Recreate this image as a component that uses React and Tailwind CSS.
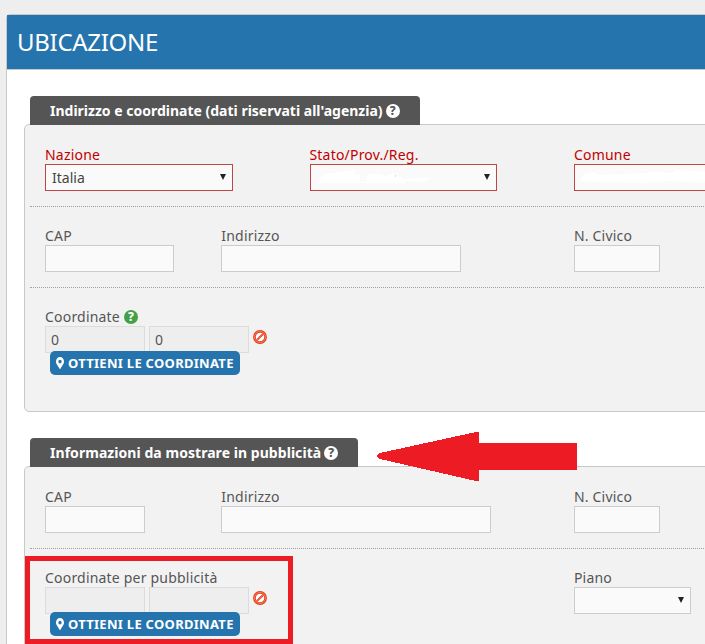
import React from 'react'
import { FaMapMarkerAlt } from 'react-icons/fa'
import clsx from 'clsx'

function HelpIcon({ className }) {
  return (
    <span
      className={clsx(
        'flex size-[14px] shrink-0 items-center justify-center rounded-full text-[12px] leading-[14px] font-extrabold tracking-normal',
        className
      )}
    >
      ?
    </span>
  )
}

function Section({ title, titleClassName, children }) {
  return (
    <section>
      <div className="relative z-10 ml-[6px] flex h-[29px] w-fit items-center gap-[3px] rounded-t bg-[#555] px-5 font-bold whitespace-nowrap text-white">
        <h3 className={clsx('text-[14px]', titleClassName)}>{title}</h3>
        <HelpIcon className="bg-white text-[#555]" />
      </div>
      <div className="-mt-px h-[288px] rounded-l-[5px] border border-[#c8c8c8] bg-[#f2f2f2] pl-[5px]">
        {children}
      </div>
    </section>
  )
}

function Row({ first, last, children }) {
  return (
    <div
      className={clsx(
        'grid grid-cols-[repeat(12,88.17px)]',
        first ? 'h-[82px] pt-[21px]' : 'h-[81px] pt-5',
        !last && 'border-b border-dotted border-[#a0a0a0]'
      )}
    >
      {children}
    </div>
  )
}

function Field({ label, required, className, help, children }) {
  return (
    <div className={clsx('pl-[15px]', className)}>
      <label
        className={clsx(
          'flex h-[18px] items-center gap-1 tracking-[0.2px] whitespace-nowrap',
          required ? 'text-[#c00000]' : 'text-[#555]'
        )}
      >
        {label}
        {help && <HelpIcon className="-mt-px bg-[#43a047] text-white" />}
      </label>
      {children}
    </div>
  )
}

function Input({ className }) {
  return <input className={clsx('block h-[27px] border border-[#ccc] bg-[#fafafa] px-[6px] outline-none', className)} />
}

function Select({ value, required, className, children }) {
  return (
    <button
      className={clsx(
        'flex h-[27px] items-center justify-between border bg-[#fafafa] pr-[6px] pl-[6px] text-[#444]',
        required ? 'border-[#c04545]' : 'border-[#ccc]',
        className
      )}
    >
      <span>{value}</span>
      {children}
      <svg className="-mt-[2px] h-[6px] w-[6px] shrink-0 fill-[#222]" viewBox="0 0 6 6">
        <path d="M0 0H6L3 6Z" />
      </svg>
    </button>
  )
}

function ForbiddenIcon() {
  return (
    <svg className="mt-[4px] size-[14px]" viewBox="0 0 15 15" fill="none">
      <circle cx="7.5" cy="7.5" r="6" fill="#fff" stroke="#dc3a18" strokeWidth="2.8" />
      <circle cx="7.5" cy="7.5" r="6" stroke="#ff704d" strokeWidth="1.2" />
      <path d="M4.4 10.6L10.6 4.4" stroke="#dc3a18" strokeWidth="2.2" />
      <path d="M4.4 10.6L10.6 4.4" stroke="#ff7854" strokeWidth="0.8" />
    </svg>
  )
}

function Coordinates({ value }) {
  return (
    <>
      <div className="flex h-[25px] items-start gap-1">
        <input readOnly value={value} className="h-[27px] w-[100px] shrink-0 border border-[#dcdcdc] bg-[#eee] px-[5px] text-[#555]" />
        <input readOnly value={value} className="h-[27px] w-[100px] shrink-0 border border-[#dcdcdc] bg-[#eee] px-[5px] text-[#555]" />
        <ForbiddenIcon />
      </div>
      <button className="relative ml-[5px] flex h-6 w-[190px] items-center gap-1 rounded-[5px] bg-[#2574ad] pl-[6px] text-[13px] font-bold tracking-[0.29px] whitespace-nowrap text-white">
        <FaMapMarkerAlt className="h-3 w-2 shrink-0" preserveAspectRatio="none" />
        OTTIENI LE COORDINATE
      </button>
    </>
  )
}

export default function App() {
  return (
    <div className="relative h-[644px] w-[705px] overflow-hidden bg-[#eee] pt-[14px] pl-[6px] font-['Noto_Sans',sans-serif] text-[14px] leading-[18px]">
      <main className="h-[700px] w-[1120px] rounded-tl border border-[#c8c8c8] bg-white">
        <header className="flex h-[55px] items-center border-b border-[#c8c8c8] bg-[#2574ad] pl-[10px]">
          <h1 className="text-[24px] tracking-[-0.3px] text-white">UBICAZIONE</h1>
        </header>

        <div className="flex flex-col gap-[26px] pt-[26px] pl-[17px]">
          <Section title="Indirizzo e coordinate (dati riservati all'agenzia)">
            <Row first>
              <Field label="Nazione" required className="col-span-3">
                <Select value="Italia" required className="w-[188px]" />
              </Field>
              <Field label="Stato/Prov./Reg." required className="col-span-3">
                <Select required className="ml-[0.5px] w-[187px]">
                  <svg className="mr-auto h-[18px] w-[112px]" viewBox="0 0 112 18">
                    <path d="M1 14L4 8L8 5L24 3L37 1L39 6L43 5V13L50 12V5L62 5L70 7L76 4L86 10L112 9V11L104 13L88 12V14Z" fill="#fff" />
                    <path d="M78 7h1" stroke="#bbb" />
                  </svg>
                </Select>
              </Field>
              <Field label="Comune" required className="col-span-3">
                <Select required className="w-[188px]">
                  <svg className="mr-auto h-[18px] w-[138px]" viewBox="0 0 138 18">
                    <path d="M0 12L3 5L12 3L18 6L65 4L75 3L92 4L95 1L118 2L138 6V12L120 14L88 12L65 14L10 13Z" fill="#fff" />
                  </svg>
                </Select>
              </Field>
            </Row>
            <Row>
              <Field label="CAP" className="col-span-2">
                <Input className="w-[129px]" />
              </Field>
              <Field label="Indirizzo" className="col-span-4">
                <Input className="w-[240px]" />
              </Field>
              <Field label="N. Civico" className="col-span-2">
                <Input className="w-[86px]" />
              </Field>
            </Row>
            <Row last>
              <Field label="Coordinate" help className="col-span-4">
                <Coordinates value="0" />
              </Field>
            </Row>
          </Section>

          <Section title="Informazioni da mostrare in pubblicità" titleClassName="tracking-[0.05px]">
            <Row first>
              <Field label="CAP" className="col-span-2">
                <Input className="w-[100px]" />
              </Field>
              <Field label="Indirizzo" className="col-span-4">
                <Input className="w-[270px]" />
              </Field>
              <Field label="N. Civico" className="col-span-2">
                <Input className="w-[86px]" />
              </Field>
            </Row>
            <Row last>
              <Field label="Coordinate per pubblicità" className="col-span-6">
                <Coordinates value="" />
              </Field>
              <Field label="Piano" className="col-span-3">
                <Select className="w-[117px]" />
              </Field>
            </Row>
          </Section>
        </div>
      </main>

      {/* Annotations over the form */}
      <svg className="absolute top-[432px] left-[377px] z-20 h-[49px] w-[200px]" viewBox="0 0 200 49" shapeRendering="crispEdges">
        <path d="M0 23L3 21L99 0H102V11H199L200 12V37L199 38H102V49H99L3 27L0 25Z" fill="#ed1c24" />
      </svg>
      <div className="absolute top-[556px] left-[25px] z-20 h-[88px] w-[268px] border-[5px] border-[#ed1c24]" />
    </div>
  )
}
